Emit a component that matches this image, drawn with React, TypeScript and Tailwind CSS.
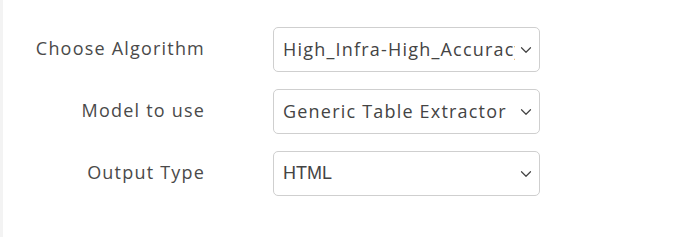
import { ChevronDown } from "lucide-react";

const rows = [
  { label: "Choose Algorithm", value: "High_Infra-High_Accuracy", font: "font-['Open_Sans',sans-serif] tracking-[1.2px]" },
  { label: "Model to use", value: "Generic Table Extractor", font: "font-['Open_Sans',sans-serif] tracking-[1.2px]" },
  { label: "Output Type", value: "HTML", font: "font-['Liberation_Sans',Arial,sans-serif]" },
];

export default function App() {
  return (
    <div className="h-[237px] w-[681px] bg-white border-l-[3px] border-[#f3f3f3] font-['Open_Sans',sans-serif]">
      <div className="flex flex-col gap-[17px] pt-[27px]">
        {rows.map((r) => (
          <div key={r.label} className="flex items-center">
            <div className="w-[202px] -mt-[2px] text-right text-[18px] tracking-[1.2px] text-[#4a4a4a]">{r.label}</div>
            <div className="ml-[68px] flex h-[45px] w-[267px] items-center rounded-[5px] border border-[#cfcfcf] pl-[9px] pr-[4px]">
              <span className={`flex-1 overflow-hidden whitespace-nowrap text-[18px] text-[#444] ${r.font}`}>
                {r.value}
              </span>
              <ChevronDown className="ml-[2px] h-[18px] w-[18px] shrink-0 text-[#444]" strokeWidth={1.6} />
            </div>
          </div>
        ))}
      </div>
    </div>
  );
}
